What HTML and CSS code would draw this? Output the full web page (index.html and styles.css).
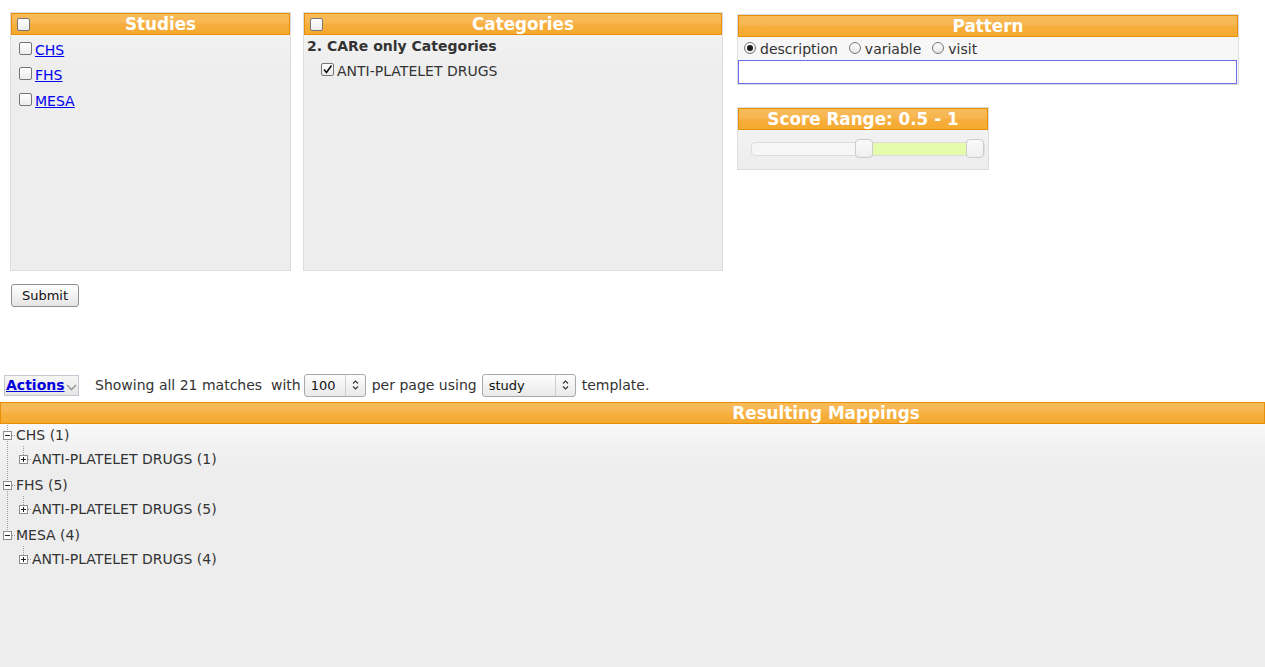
FILE: index.html
```html
<!DOCTYPE html>
<html>
<head>
<meta charset="utf-8">
<title>Mappings</title>
<link rel="stylesheet" href="styles.css">
</head>
<body>
<div class="top">
  <div class="panel studies">
    <div class="hdr hdr-cb"><span class="cb"></span><span class="hdr-title">Studies</span></div>
    <ul class="study-list">
      <li><span class="cb"></span><a href="#">CHS</a></li>
      <li><span class="cb"></span><a href="#">FHS</a></li>
      <li><span class="cb"></span><a href="#">MESA</a></li>
    </ul>
  </div>
  <div class="panel categories">
    <div class="hdr hdr-cb"><span class="cb"></span><span class="hdr-title">Categories</span></div>
    <div class="cat-group">2. CARe only Categories</div>
    <div class="cat-item"><span class="cb checked"><svg width="11" height="11" viewBox="0 0 11 11"><path d="M2 5.5 L4.5 8.5 L9.5 1.5" fill="none" stroke="#111" stroke-width="1.6"/></svg></span>ANTI-PLATELET DRUGS</div>
  </div>
  <div class="side">
    <div class="panel pattern">
      <div class="hdr">Pattern</div>
      <div class="radios">
        <span class="radio on"></span><span class="rlabel">description</span>
        <span class="radio"></span><span class="rlabel">variable</span>
        <span class="radio"></span><span class="rlabel">visit</span>
      </div>
      <div class="pattern-input"></div>
    </div>
    <div class="panel score">
      <div class="hdr">Score Range: 0.5 - 1</div>
      <div class="slider-area">
        <div class="slider">
          <div class="range" style="left:121px;width:94px"></div>
          <span class="handle" style="left:104px"></span>
          <span class="handle" style="left:215px"></span>
        </div>
      </div>
    </div>
  </div>
</div>

<div class="submit-row"><button class="btn" type="button">Submit</button></div>

<div class="toolbar">
  <div class="actions"><a href="#">Actions</a><svg width="11" height="7" viewBox="0 0 11 7"><path d="M1 1 L5.5 5.5 L10 1" fill="none" stroke="#9a9a9a" stroke-width="1.6"/></svg></div>
  <span class="tb-text showing">Showing all 21 matches&nbsp; with</span>
  <div class="sel sel-num"><span class="sel-text">100</span><span class="sel-arrow"><svg width="7" height="10" viewBox="0 0 7 10"><path d="M1 3.5 L3.5 1 L6 3.5 M1 6.5 L3.5 9 L6 6.5" fill="none" stroke="#333" stroke-width="1.1"/></svg></span></div>
  <span class="tb-text">per page using</span>
  <div class="sel sel-tpl"><span class="sel-text">study</span><span class="sel-arrow"><svg width="7" height="10" viewBox="0 0 7 10"><path d="M1 3.5 L3.5 1 L6 3.5 M1 6.5 L3.5 9 L6 6.5" fill="none" stroke="#333" stroke-width="1.1"/></svg></span></div>
  <span class="tb-text">template.</span>
</div>

<div class="results">
  <div class="hdr hdr-wide">Resulting Mappings</div>
  <div class="results-body">
    <ul class="tree">
      <li class="node">
        <div class="row"><svg class="tbox" width="9" height="9" viewBox="0 0 9 9"><rect x="0.5" y="0.5" width="8" height="8" fill="#fff" stroke="#8e8e8e"/><path d="M2 4.5h5" stroke="#222"/></svg><span class="conn"></span>CHS (1)</div>
        <ul class="children">
          <li class="child"><div class="row"><svg class="tbox" width="9" height="9" viewBox="0 0 9 9"><rect x="0.5" y="0.5" width="8" height="8" fill="#fff" stroke="#8e8e8e"/><path d="M2 4.5h5M4.5 2v5" stroke="#222"/></svg><span class="conn"></span>ANTI-PLATELET DRUGS (1)</div></li>
        </ul>
      </li>
      <li class="node">
        <div class="row"><svg class="tbox" width="9" height="9" viewBox="0 0 9 9"><rect x="0.5" y="0.5" width="8" height="8" fill="#fff" stroke="#8e8e8e"/><path d="M2 4.5h5" stroke="#222"/></svg><span class="conn"></span>FHS (5)</div>
        <ul class="children">
          <li class="child"><div class="row"><svg class="tbox" width="9" height="9" viewBox="0 0 9 9"><rect x="0.5" y="0.5" width="8" height="8" fill="#fff" stroke="#8e8e8e"/><path d="M2 4.5h5M4.5 2v5" stroke="#222"/></svg><span class="conn"></span>ANTI-PLATELET DRUGS (5)</div></li>
        </ul>
      </li>
      <li class="node last">
        <div class="row"><svg class="tbox" width="9" height="9" viewBox="0 0 9 9"><rect x="0.5" y="0.5" width="8" height="8" fill="#fff" stroke="#8e8e8e"/><path d="M2 4.5h5" stroke="#222"/></svg><span class="conn"></span>MESA (4)</div>
        <ul class="children">
          <li class="child"><div class="row"><svg class="tbox" width="9" height="9" viewBox="0 0 9 9"><rect x="0.5" y="0.5" width="8" height="8" fill="#fff" stroke="#8e8e8e"/><path d="M2 4.5h5M4.5 2v5" stroke="#222"/></svg><span class="conn"></span>ANTI-PLATELET DRUGS (4)</div></li>
        </ul>
      </li>
    </ul>
  </div>
</div>
</body>
</html>
```

FILE: styles.css
```css
html, body {
  margin: 0;
  padding: 0;
  background: #fff;
}
body {
  font-family: "DejaVu Sans", Verdana, sans-serif;
  font-size: 14px;
  color: #333;
  overflow: hidden;
}
ul {
  list-style: none;
  margin: 0;
  padding: 0;
}
a {
  color: #0000ee;
  text-decoration: underline;
}

/* ---------- top area ---------- */
.top {
  display: flex;
  align-items: flex-start;
  padding: 12px 0 0 10px;
}
.panel {
  border: 1px solid #dddddd;
  background: linear-gradient(to bottom, #f8f8f8 0px, #f1f1f1 30px, #ededed 60px, #ededed 100%);
  box-sizing: border-box;
}
.hdr {
  border: 1px solid #e78f08;
  background: linear-gradient(to bottom, #f8bb58 0%, #f7b753 40%, #f6ae3c 55%, #f5a92f 100%);
  color: #fff;
  font-weight: bold;
  font-size: 16.8px;
  height: 20px;
  line-height: 21px;
  text-align: center;
  white-space: nowrap;
}
.hdr-cb {
  display: flex;
  align-items: center;
}
.hdr-cb .cb {
  margin: 0 2px 0 5px;
  width: 13px;
  height: 13px;
}
.hdr-title {
  flex: 1;
  text-align: center;
}
.cb {
  display: inline-flex;
  align-items: center;
  justify-content: center;
  width: 13px;
  height: 13px;
  box-sizing: border-box;
  border: 1px solid #767676;
  border-radius: 2px;
  background: linear-gradient(to bottom, #ffffff, #ececec);
  flex: none;
}
.cb svg {
  display: block;
}

.studies {
  width: 281px;
  height: 259px;
}
.study-list {
  padding: 0 0 0 8px;
}
.study-list li {
  height: 25px;
  display: flex;
  align-items: center;
}
.study-list li:first-child {
  margin-top: 2px;
}
.study-list li:last-child {
  margin-top: 1px;
}
.study-list .cb {
  margin-right: 3px;
  position: relative;
  top: -1px;
}

.categories {
  width: 420px;
  height: 259px;
  margin-left: 12px;
}
.cat-group {
  font-weight: bold;
  padding-left: 3px;
  height: 21px;
  line-height: 21px;
  margin-top: 1px;
}
.cat-item {
  display: flex;
  align-items: center;
  height: 25px;
  padding-left: 17px;
  margin-top: 1px;
}
.cat-item .cb {
  margin-right: 3px;
  position: relative;
  top: -1px;
}

.side {
  margin-left: 14px;
  margin-top: 2px;
  display: flex;
  flex-direction: column;
  gap: 22px;
}
.pattern {
  width: 502px;
  height: 71px;
  background: #f7f7f7;
}
.radios {
  display: flex;
  align-items: center;
  height: 23px;
  padding-left: 6px;
}
.radio {
  width: 12px;
  height: 12px;
  box-sizing: border-box;
  border: 1px solid #777;
  border-radius: 50%;
  background: linear-gradient(to bottom, #ffffff, #e6e6e6);
  display: inline-flex;
  align-items: center;
  justify-content: center;
  margin-right: 4px;
  position: relative;
  top: -1px;
}
.radio.on::after {
  content: "";
  width: 6px;
  height: 6px;
  border-radius: 50%;
  background: #1a1a1a;
}
.rlabel {
  margin-right: 11px;
}
.pattern-input {
  width: 499px;
  height: 24px;
  box-sizing: border-box;
  border: 1px solid #6c6cf0;
  background: #fff;
}

.score {
  width: 252px;
  height: 63px;
}
.slider-area {
  padding: 12px 0 0 13px;
}
.slider {
  position: relative;
  width: 234px;
  height: 14px;
  box-sizing: border-box;
  border: 1px solid #dcdcdc;
  border-radius: 4px;
  background: #f6f6f6;
}
.range {
  position: absolute;
  top: 0;
  bottom: 0;
  background: #e6fcad;
}
.handle {
  position: absolute;
  top: -4px;
  width: 18px;
  height: 19px;
  box-sizing: border-box;
  border: 1px solid #cccccc;
  border-radius: 4px;
  background: linear-gradient(to bottom, #fafafa, #efefef);
  margin-left: -1px;
}

/* ---------- submit ---------- */
.submit-row {
  padding: 13px 0 0 11px;
}
.btn {
  width: 68px;
  height: 23px;
  box-sizing: border-box;
  border: 1px solid #8f8f8f;
  border-radius: 3px;
  background: linear-gradient(to bottom, #ffffff, #e4e4e4);
  font-family: "DejaVu Sans", Verdana, sans-serif;
  font-size: 13px;
  color: #111;
  padding: 0;
  display: block;
}

/* ---------- toolbar ---------- */
.toolbar {
  display: flex;
  align-items: center;
  margin-top: 66px;
  padding-left: 4px;
  height: 24px;
}
.actions {
  width: 75px;
  height: 21px;
  box-sizing: border-box;
  border: 1px solid #c4c8d2;
  background: linear-gradient(to bottom, #f6f6f6, #e6e6e6);
  display: flex;
  align-items: center;
  padding-left: 1px;
}
.actions a {
  font-weight: bold;
  color: #0000dd;
}
.actions svg {
  margin-left: 1px;
  margin-top: 4px;
}
.tb-text {
  margin: 0 5px 0 6px;
}
.showing {
  margin-left: 16px;
  margin-right: 3px;
}
.sel {
  display: inline-flex;
  align-items: center;
  height: 23px;
  box-sizing: border-box;
  border: 1px solid #a9a9a9;
  border-radius: 3px;
  background: linear-gradient(to bottom, #fdfdfd, #e9e9e9);
  font-size: 13px;
  color: #111;
}
.sel-text {
  flex: 1;
  padding-left: 6px;
}
.sel-arrow {
  width: 19px;
  height: 100%;
  border-left: 1px solid #cfcfcf;
  display: flex;
  align-items: center;
  justify-content: center;
}
.sel-num {
  width: 62px;
}
.sel-tpl {
  width: 94px;
}

/* ---------- results ---------- */
.results {
  margin-top: 5px;
}
.hdr-wide {
  padding-left: 387px;
  font-size: 16.8px;
}
.results-body {
  height: 260px;
  padding-top: 1px;
  background: linear-gradient(to bottom, #f8f8f8 0px, #f1f1f1 25px, #ededed 50px, #ededed 100%);
}
.tree {
  padding-left: 3px;
}
.row {
  display: flex;
  align-items: center;
  height: 20px;
}
.tbox {
  display: block;
  flex: none;
}
.conn {
  width: 3px;
  height: 0;
  border-top: 1px dotted #999;
  margin-right: 1px;
}
.node {
  background-image: repeating-linear-gradient(to bottom, #a0a0a0 0px, #a0a0a0 1px, transparent 1px, transparent 2px);
  background-size: 1px 100%;
  background-position: 4px 0;
  background-repeat: no-repeat;
}
.node + .node {
  padding-top: 6px;
}
.node.last {
  background-size: 1px 11px;
}
.children {
  padding-left: 16px;
}
.child {
  padding-top: 4px;
  background-image: repeating-linear-gradient(to bottom, #a0a0a0 0px, #a0a0a0 1px, transparent 1px, transparent 2px);
  background-size: 1px 9px;
  background-position: 4px 1px;
  background-repeat: no-repeat;
}
```
